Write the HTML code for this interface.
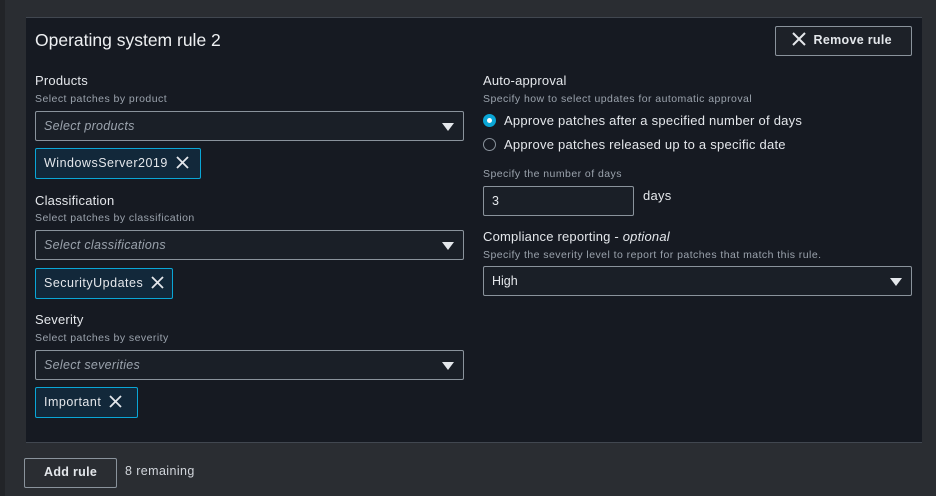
<!DOCTYPE html>
<html><head><style>
*{box-sizing:border-box;margin:0;padding:0}
body{width:936px;height:496px;background:#2a2d32;font-family:"Liberation Sans",sans-serif;color:#d1d5db;position:relative;overflow:hidden}
.a{position:absolute;white-space:nowrap}
.panel{position:absolute;left:26px;top:17px;width:896px;height:426px;background:#161a22;border-top:1px solid #414750;border-bottom:1px solid #414750}
.lbl{font-size:13px;color:#e4e7eb;letter-spacing:0.2px}
.desc{font-size:10.5px;color:#9ba3ad;letter-spacing:0.45px}
.sel{position:absolute;border:1px solid #8a939c;background:#1a1f27;height:30px;border-radius:2px}
.sel i{position:absolute;left:8px;top:7px;font-size:12.5px;color:#9ba3ad;letter-spacing:0.3px}
.tri{position:absolute;right:9px;top:11px;width:0;height:0;border-left:6px solid transparent;border-right:6px solid transparent;border-top:8px solid #e4e7eb}
.tok{position:absolute;border:1px solid #0aa6d6;background:#12283a;height:31px;font-size:12.5px;color:#e4e7eb;padding:7px 0 0 8px;border-radius:2px;letter-spacing:0.5px}
.x{display:inline-block;vertical-align:middle;margin-left:8px;margin-top:-3px}
.btn{position:absolute;border:1px solid #8a939c;font-weight:bold;font-size:12.5px;color:#e4e7eb;border-radius:2px;letter-spacing:0.3px}
.r{font-size:13px;color:#e4e7eb;letter-spacing:0.25px}
</style></head><body>
<div class="a" style="left:0;top:0;width:5px;height:496px;background:#222428"></div>
<div class="panel"></div>
<div class="a" style="left:35px;top:30px;font-size:17.5px;color:#eef0f2">Operating system rule 2</div>
<div class="btn" style="left:775px;top:26px;width:137px;height:30px;background:#1d2128;padding:6px 0 0 16px">
<svg width="14" height="14" viewBox="0 0 14 14" style="vertical-align:middle;margin-top:-3px"><path d="M1 1L13 13M13 1L1 13" stroke="#e4e7eb" stroke-width="2"/></svg>&nbsp; Remove rule</div>

<div class="a lbl" style="left:35px;top:73px">Products</div>
<div class="a desc" style="left:35px;top:93px">Select patches by product</div>
<div class="sel" style="left:35px;top:111px;width:429px"><i>Select products</i><span class="tri"></span></div>
<div class="tok" style="left:35px;top:148px;width:166px">WindowsServer2019<svg class="x" width="13" height="13" viewBox="0 0 13 13"><path d="M1 1L12 12M12 1L1 12" stroke="#e4e7eb" stroke-width="1.8"/></svg></div>

<div class="a lbl" style="left:35px;top:193px">Classification</div>
<div class="a desc" style="left:35px;top:212px">Select patches by classification</div>
<div class="sel" style="left:35px;top:230px;width:429px"><i>Select classifications</i><span class="tri"></span></div>
<div class="tok" style="left:35px;top:268px;width:138px">SecurityUpdates<svg class="x" width="13" height="13" viewBox="0 0 13 13"><path d="M1 1L12 12M12 1L1 12" stroke="#e4e7eb" stroke-width="1.8"/></svg></div>

<div class="a lbl" style="left:35px;top:312px">Severity</div>
<div class="a desc" style="left:35px;top:332px">Select patches by severity</div>
<div class="sel" style="left:35px;top:350px;width:429px"><i>Select severities</i><span class="tri"></span></div>
<div class="tok" style="left:35px;top:387px;width:103px">Important<svg class="x" width="13" height="13" viewBox="0 0 13 13"><path d="M1 1L12 12M12 1L1 12" stroke="#e4e7eb" stroke-width="1.8"/></svg></div>

<div class="a lbl" style="left:483px;top:73px">Auto-approval</div>
<div class="a desc" style="left:483px;top:93px">Specify how to select updates for automatic approval</div>
<div class="a" style="left:483px;top:114px;width:13px;height:13px;border-radius:50%;background:#0aa6d6;border:4px solid #0aa6d6"><div style="width:5px;height:5px;background:#fff;border-radius:50%"></div></div>
<div class="a r" style="left:504px;top:113px">Approve patches after a specified number of days</div>
<div class="a" style="left:483px;top:138px;width:13px;height:13px;border-radius:50%;border:1px solid #8a939c"></div>
<div class="a r" style="left:504px;top:137px">Approve patches released up to a specific date</div>
<div class="a desc" style="left:483px;top:168px">Specify the number of days</div>
<div class="sel" style="left:483px;top:186px;width:151px"><span style="position:absolute;left:8px;top:7px;font-size:12.5px;color:#e4e7eb">3</span></div>
<div class="a r" style="left:643px;top:188px">days</div>
<div class="a lbl" style="left:483px;top:229px">Compliance reporting - <i>optional</i></div>
<div class="a desc" style="left:483px;top:249px">Specify the severity level to report for patches that match this rule.</div>
<div class="sel" style="left:483px;top:266px;width:429px"><span style="position:absolute;left:8px;top:7px;font-size:12.5px;color:#e4e7eb">High</span><span class="tri"></span></div>

<div class="btn" style="left:24px;top:458px;width:93px;height:30px;padding:6px 0 0 19px">Add rule</div>
<div class="a" style="left:125px;top:464px;font-size:12.5px;color:#d1d5db;letter-spacing:0.4px">8 remaining</div>
</body></html>
